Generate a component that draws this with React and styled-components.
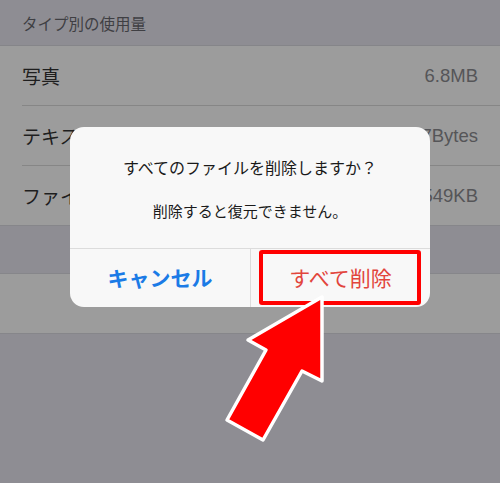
import React from "react";
import styled, { createGlobalStyle } from "styled-components";

const Global = createGlobalStyle`
  html, body { margin: 0; padding: 0; }
  body {
    width: 500px; height: 483px; overflow: hidden;
    background: #8e8d93;
    font-family: "Noto Sans CJK JP", "Noto Sans", sans-serif;
  }
`;

const Page = styled.div`
  position: relative;
  width: 500px;
  height: 483px;
  background: #8e8d93;
  overflow: hidden;
`;

const SectionHeader = styled.div`
  height: 45px;
  padding-left: 22px;
  display: flex;
  align-items: center;
  font-size: 15.5px;
  color: #3f3f43;
  border-bottom: 1px solid #858589;
`;

const Group = styled.div`
  background: #9c9c9c;
  border-bottom: 1px solid #86868a;
`;

const Spacer = styled.div`
  height: 47px;
  border-bottom: 1px solid #86868a;
`;

const Row = styled.div`
  height: 59px;
  margin-left: 22px;
  padding-right: 22px;
  display: flex;
  align-items: center;
  justify-content: ${(p) => (p.$center ? "center" : "space-between")};
  border-bottom: ${(p) => (p.$last ? "none" : "1px solid #868686")};
  font-size: 19px;
  color: #1e1e1e;
`;

const Value = styled.span`
  font-family: "Liberation Sans", "Noto Sans", sans-serif;
  color: #555558;
  font-size: 18.5px;
`;

const RedLabel = styled.span`
  color: #9a2020;
  font-size: 17px;
  margin-bottom: 20px;
`;

const Dialog = styled.div`
  position: absolute;
  left: 70px;
  top: 127px;
  width: 360px;
  height: 180px;
  background: #f8f8f8;
  border-radius: 14px;
  display: flex;
  flex-direction: column;
  overflow: hidden;
`;

const DialogBody = styled.div`
  height: 122px;
  display: flex;
  flex-direction: column;
  align-items: center;
  padding-top: 28px;
  box-sizing: border-box;
  gap: 21px;
  border-bottom: 1px solid #dcdcdc;
`;

const Title = styled.div`
  font-size: 16px;
  color: #1a1a1a;
  line-height: 24px;
`;

const Message = styled.div`
  font-size: 15px;
  color: #1a1a1a;
  line-height: 22px;
`;

const Buttons = styled.div`
  flex: 1;
  display: grid;
  grid-template-columns: 180px 1fr;
`;

const DialogButton = styled.div`
  display: flex;
  align-items: center;
  justify-content: center;
  font-size: 21px;
  padding-bottom: 2px;
  font-weight: ${(p) => (p.$bold ? 700 : 400)};
  color: ${(p) => (p.$danger ? "#e2453c" : "#1b7be6")};
  border-left: ${(p) => (p.$divider ? "1px solid #dcdcdc" : "none")};
`;

const Highlight = styled.div`
  position: absolute;
  left: 259px;
  top: 250px;
  width: 162px;
  height: 55px;
  box-sizing: border-box;
  border: 4px solid #ff0000;
  border-radius: 3px;
`;

const ArrowSvg = styled.svg`
  position: absolute;
  left: 0;
  top: 0;
`;

export default function App() {
  return (
    <Page>
      <Global />
      <SectionHeader>タイプ別の使用量</SectionHeader>
      <Group>
        <Row>
          写真<Value>6.8MB</Value>
        </Row>
        <Row>
          テキスト<Value>377Bytes</Value>
        </Row>
        <Row $last>
          ファイル<Value>549KB</Value>
        </Row>
      </Group>
      <Spacer />
      <Group>
        <Row $last $center>
          <RedLabel>すべてのファイルを削除</RedLabel>
        </Row>
      </Group>

      <Dialog>
        <DialogBody>
          <Title>すべてのファイルを削除しますか？</Title>
          <Message>削除すると復元できません。</Message>
        </DialogBody>
        <Buttons>
          <DialogButton $bold>キャンセル</DialogButton>
          <DialogButton $danger $divider>すべて削除</DialogButton>
        </Buttons>
      </Dialog>
      <Highlight />
      <ArrowSvg width="500" height="483" viewBox="0 0 500 483">
        <polygon
          points="322,297 322,381 302,371 263,440 227,420 266,350 248,340"
          fill="#ff0000"
          stroke="#ffffff"
          strokeWidth="3.5"
          strokeLinejoin="round"
        />
      </ArrowSvg>
    </Page>
  );
}
